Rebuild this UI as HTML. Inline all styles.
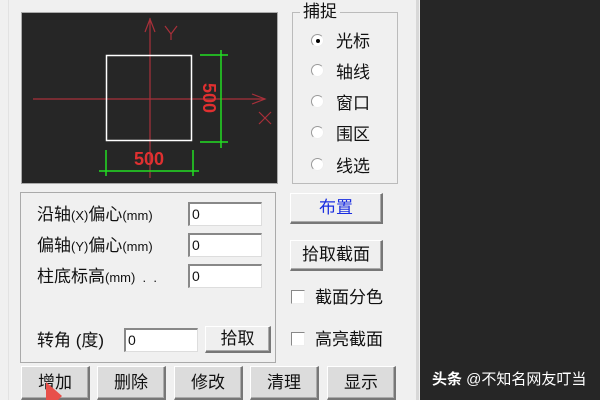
<!DOCTYPE html>
<html><head><meta charset="utf-8"><style>
*{margin:0;padding:0;box-sizing:border-box}
body{width:600px;height:400px;overflow:hidden;background:#f0f0f0;position:relative;font-family:"Liberation Sans","Noto Sans CJK SC",sans-serif;color:#111}
.a{position:absolute}
.t{position:absolute;font-size:17px;line-height:20px;white-space:nowrap}
.inp{position:absolute;background:#fff;border-top:2px solid #888;border-left:2px solid #888;border-right:1px solid #ddd;border-bottom:1px solid #ddd;font-size:14px;padding-left:2px;line-height:20px}
.btn{position:absolute;background:#efefef;border:1px solid #fff;border-right:2px solid #777;border-bottom:2px solid #777;font-size:17px;text-align:center;box-shadow:inset -1px -1px 0 #aaa}
.btn.g{background:#dcdcdc;border-top:1px solid #fff;border-left:1px solid #fff}
.cb{position:absolute;width:14px;height:14px;background:#fff;border-top:1px solid #888;border-left:1px solid #888;border-right:1px solid #eee;border-bottom:1px solid #eee}
.rd{position:absolute;width:13px;height:13px;border-radius:50%;background:#fff;border:1px solid #999;border-right-color:#eee;border-bottom-color:#eee}
</style></head><body>
<div class="a" style="left:8px;top:0;width:1px;height:400px;background:#e2e2e2"></div>
<div class="a" style="left:21px;top:12px;width:257px;height:172px;border:1px solid #aaa;background:#262626"></div>
<svg class="a" style="left:0;top:0" width="300" height="200">
<g stroke="#a8303a" stroke-width="1.2" fill="none">
<line x1="150" y1="18" x2="150" y2="178"/><polyline points="145,32 150,19 155,32"/>
<line x1="33" y1="99" x2="265" y2="99"/><polyline points="252,94 265,99 252,104"/>
<polyline points="165,26 171,34 177,26"/><line x1="171" y1="34" x2="171" y2="40"/>
<line x1="259" y1="112" x2="271" y2="124"/><line x1="271" y1="112" x2="259" y2="124"/>
</g>
<rect x="106.5" y="55.5" width="85" height="85" stroke="#fff" stroke-width="1.5" fill="none"/>
<g stroke="#22dd22" stroke-width="1.5">
<line x1="200" y1="55" x2="228" y2="55"/><line x1="200" y1="142" x2="228" y2="142"/>
<line x1="221" y1="50" x2="221" y2="148"/>
<line x1="106" y1="150" x2="106" y2="176"/><line x1="193" y1="150" x2="193" y2="176"/>
<line x1="99" y1="171" x2="199" y2="171"/>
</g>
<text x="149" y="165" fill="#e03030" font-size="18" font-weight="bold" text-anchor="middle" font-family="Liberation Sans">500</text>
<text transform="translate(203,98) rotate(90)" fill="#e03030" font-size="18" font-weight="bold" text-anchor="middle" font-family="Liberation Sans">500</text>
</svg>
<div class="a" style="left:292px;top:12px;width:106px;height:172px;border:1px solid #bbb"></div>
<div class="t" style="left:300px;top:2px;background:#f0f0f0;padding:0 3px">捕捉</div>
<div class="rd" style="left:311px;top:34px"></div><div class="a" style="left:316px;top:39px;width:4px;height:4px;background:#000;border-radius:50%"></div>
<div class="t" style="left:336px;top:32px">光标</div>
<div class="rd" style="left:311px;top:64px"></div><div class="t" style="left:336px;top:63px">轴线</div>
<div class="rd" style="left:311px;top:95px"></div><div class="t" style="left:336px;top:94px">窗口</div>
<div class="rd" style="left:311px;top:126px"></div><div class="t" style="left:336px;top:125px">围区</div>
<div class="rd" style="left:311px;top:158px"></div><div class="t" style="left:336px;top:157px">线选</div>
<div class="a" style="left:20px;top:192px;width:256px;height:171px;border:1px solid #aaa"></div>
<div class="t" style="left:37px;top:205px">沿轴<span style="font-size:13px">(X)</span>偏心<span style="font-size:13px">(mm)</span></div>
<div class="inp" style="left:188px;top:202px;width:74px;height:24px">0</div>
<div class="t" style="left:37px;top:236px">偏轴<span style="font-size:13px">(Y)</span>偏心<span style="font-size:13px">(mm)</span></div>
<div class="inp" style="left:188px;top:233px;width:74px;height:24px">0</div>
<div class="t" style="left:37px;top:267px">柱底标高<span style="font-size:13px">(mm) &nbsp;. &nbsp;.</span></div>
<div class="inp" style="left:188px;top:264px;width:74px;height:24px">0</div>
<div class="t" style="left:37px;top:331px">转角 (度)</div>
<div class="inp" style="left:124px;top:328px;width:74px;height:24px">0</div>
<div class="btn" style="left:205px;top:326px;width:66px;height:27px;line-height:24px">拾取</div>
<div class="btn" style="left:290px;top:193px;width:93px;height:31px;line-height:28px;color:#1a2ee0">布置</div>
<div class="btn" style="left:290px;top:240px;width:93px;height:31px;line-height:28px">拾取截面</div>
<div class="cb" style="left:291px;top:290px"></div><div class="t" style="left:315px;top:288px">截面分色</div>
<div class="cb" style="left:291px;top:332px"></div><div class="t" style="left:315px;top:330px">高亮截面</div>
<div class="btn g" style="left:21px;top:366px;width:69px;height:34px;line-height:32px">增加</div>
<div class="btn g" style="left:97px;top:366px;width:69px;height:34px;line-height:32px">删除</div>
<div class="btn g" style="left:174px;top:366px;width:69px;height:34px;line-height:32px">修改</div>
<div class="btn g" style="left:250px;top:366px;width:69px;height:34px;line-height:32px">清理</div>
<div class="btn g" style="left:327px;top:366px;width:69px;height:34px;line-height:32px">显示</div>
<svg class="a" style="left:40px;top:380px" width="30" height="20"><polygon points="6,2 22,16 18,20 6,20" fill="#e8504a"/></svg>
<div class="a" style="left:416px;top:0;width:3px;height:400px;background:#d8d8d8"></div>
<div class="a" style="left:420px;top:0;width:180px;height:400px;background:#262626"></div>
<div class="t" style="left:432px;top:370px;color:#fff;font-size:15px"><b>头条</b> @不知名网友叮当</div>
</body></html>
